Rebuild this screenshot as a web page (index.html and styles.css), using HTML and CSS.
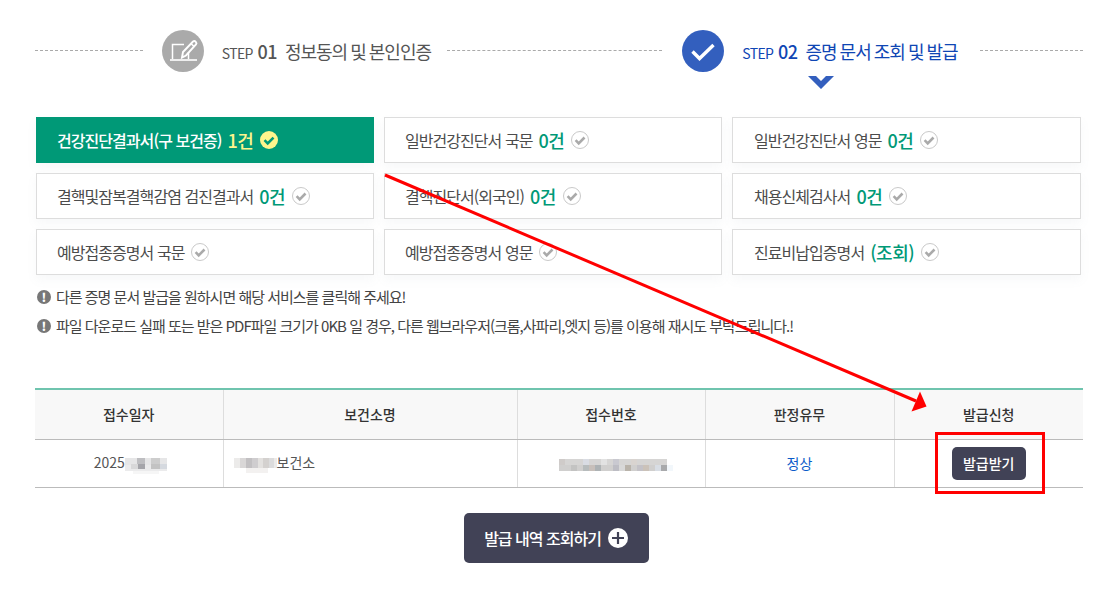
FILE: index.html
```html
<!DOCTYPE html>
<html lang="ko">
<head>
<meta charset="utf-8">
<title>증명 문서 조회 및 발급</title>
<link rel="stylesheet" href="styles.css">
</head>
<body>
<main class="page">
  <div class="steps">
    <span class="dash dash-a"></span>
    <span class="circle circle-grey">
      <svg width="42" height="42" viewBox="0 0 42 42"><path d="M22 14.500H10.500V29M26.500 22v7" fill="none" stroke="#fff" stroke-width="1.500"/><path d="M8 30h27" stroke="#fff" stroke-width="1.600"/><path d="M20 27.500l1-5.500 10-10.500q1.500-1 2.800 0.300t0.200 2.700L24 25.500z" fill="none" stroke="#fff" stroke-width="1.900"/><path d="M29 13.500l3.200 3.200" stroke="#fff" stroke-width="1.500"/></svg>
    </span>
    <span class="step-text step-text-a"><span class="step-label">STEP</span> <b class="step-num">01</b><span class="step-title">정보동의 및 본인인증</span></span>
    <span class="dash dash-b"></span>
    <span class="circle circle-blue">
      <svg width="42" height="42" viewBox="0 0 42 42"><path d="M10.500 21.500l7 7L31.500 15" fill="none" stroke="#fff" stroke-width="3.400"/></svg>
      <svg class="chevron" width="26" height="14" viewBox="0 0 26 14"><path d="M0 0h8l5 5 5-5h8L13 13z" fill="#335fbe"/></svg>
    </span>
    <span class="step-text step-text-b"><span class="step-label">STEP</span> <b class="step-num">02</b><span class="step-title">증명 문서 조회 및 발급</span></span>
    <span class="dash dash-c"></span>
  </div>

  <div class="cards">
    <a class="card card-on">건강진단결과서(구 보건증)<b class="count">1건</b><svg class="tick" width="18" height="18" viewBox="0 0 18 18"><circle cx="9" cy="9" r="9" fill="#fdf58d"/><path d="M4.500 9.200l3.200 3.200 5.800-5.800" fill="none" stroke="#009977" stroke-width="2.600"/></svg></a>
    <a class="card">일반건강진단서 국문<b class="count">0건</b><svg class="tick" width="18" height="18" viewBox="0 0 18 18"><circle cx="9" cy="9" r="8.500" fill="#fff" stroke="#c9c9c9"/><path d="M4.600 9.200l3.100 3.100 5.800-5.800" fill="none" stroke="#aaa" stroke-width="2.600"/></svg></a>
    <a class="card">일반건강진단서 영문<b class="count">0건</b><svg class="tick" width="18" height="18" viewBox="0 0 18 18"><circle cx="9" cy="9" r="8.500" fill="#fff" stroke="#c9c9c9"/><path d="M4.600 9.200l3.100 3.100 5.800-5.800" fill="none" stroke="#aaa" stroke-width="2.600"/></svg></a>
    <a class="card">결핵및잠복결핵감염 검진결과서<b class="count">0건</b><svg class="tick" width="18" height="18" viewBox="0 0 18 18"><circle cx="9" cy="9" r="8.500" fill="#fff" stroke="#c9c9c9"/><path d="M4.600 9.200l3.100 3.100 5.800-5.800" fill="none" stroke="#aaa" stroke-width="2.600"/></svg></a>
    <a class="card">결핵진단서(외국인)<b class="count">0건</b><svg class="tick" width="18" height="18" viewBox="0 0 18 18"><circle cx="9" cy="9" r="8.500" fill="#fff" stroke="#c9c9c9"/><path d="M4.600 9.200l3.100 3.100 5.800-5.800" fill="none" stroke="#aaa" stroke-width="2.600"/></svg></a>
    <a class="card">채용신체검사서<b class="count">0건</b><svg class="tick" width="18" height="18" viewBox="0 0 18 18"><circle cx="9" cy="9" r="8.500" fill="#fff" stroke="#c9c9c9"/><path d="M4.600 9.200l3.100 3.100 5.800-5.800" fill="none" stroke="#aaa" stroke-width="2.600"/></svg></a>
    <a class="card">예방접종증명서 국문<svg class="tick" width="18" height="18" viewBox="0 0 18 18"><circle cx="9" cy="9" r="8.500" fill="#fff" stroke="#c9c9c9"/><path d="M4.600 9.200l3.100 3.100 5.800-5.800" fill="none" stroke="#aaa" stroke-width="2.600"/></svg></a>
    <a class="card">예방접종증명서 영문<svg class="tick" width="18" height="18" viewBox="0 0 18 18"><circle cx="9" cy="9" r="8.500" fill="#fff" stroke="#c9c9c9"/><path d="M4.600 9.200l3.100 3.100 5.800-5.800" fill="none" stroke="#aaa" stroke-width="2.600"/></svg></a>
    <a class="card">진료비납입증명서<b class="count">(조회)</b><svg class="tick" width="18" height="18" viewBox="0 0 18 18"><circle cx="9" cy="9" r="8.500" fill="#fff" stroke="#c9c9c9"/><path d="M4.600 9.200l3.100 3.100 5.800-5.800" fill="none" stroke="#aaa" stroke-width="2.600"/></svg></a>
  </div>

  <ul class="notes">
    <li><span class="bang">!</span>다른 증명 문서 발급을 원하시면 해당 서비스를 클릭해 주세요!</li>
    <li><span class="bang">!</span>파일 다운로드 실패 또는 받은 PDF파일 크기가 0KB 일 경우, 다른 웹브라우저(크롬,사파리,엣지 등)를 이용해 재시도 부탁드립니다.!</li>
  </ul>

  <table class="result">
    <thead>
      <tr><th class="c1">접수일자</th><th class="c2">보건소명</th><th class="c3">접수번호</th><th class="c4">판정유무</th><th class="c5">발급신청</th></tr>
    </thead>
    <tbody>
      <tr>
        <td class="date">2025<svg class="mask" width="44" height="18" viewBox="0 0 44 18"><rect x="0" y="2" width="42" height="7" fill="#e6e6e7"/><rect x="0" y="9" width="42" height="6" fill="#ebebec"/><rect x="12" y="2" width="8" height="6" fill="#bebec1"/><rect x="13" y="8" width="7" height="5" fill="#a5a5aa"/><rect x="6" y="8" width="7" height="5" fill="#d8d8d9"/><rect x="26" y="2" width="9" height="6" fill="#cdcdcd"/><rect x="26" y="8" width="9" height="5" fill="#c3c3c3"/><rect x="35" y="8" width="7" height="5" fill="#d5d9df"/><rect x="8" y="15" width="26" height="3" fill="#f6f6f6"/></svg></td>
        <td class="left"><svg class="mask" width="43" height="18" viewBox="0 0 43 18"><rect x="0" y="2" width="43" height="10" fill="#ecebea"/><rect x="6" y="2" width="6" height="10" fill="#d9d7d7"/><rect x="12" y="2" width="6" height="10" fill="#c2c0c2"/><rect x="18" y="2" width="6" height="10" fill="#cfcdcf"/><rect x="24" y="2" width="5" height="10" fill="#e3e1df"/><rect x="29" y="2" width="6" height="10" fill="#d4d1cf"/><rect x="35" y="2" width="5" height="10" fill="#dcdcdd"/><rect x="12" y="12" width="22" height="5" fill="#f3f1f0"/></svg>보건소</td>
        <td class="receipt"><svg class="mask" width="114" height="12" viewBox="0 0 114 12"><g fill="#d6d5d4"><rect width="108" height="6"/></g><g fill="#d0cfce"><rect y="6" width="108" height="6"/></g><rect x="0" y="0" width="6" height="6" fill="#cfcbc9"/><rect x="24" y="0" width="6" height="6" fill="#d9dce3"/><rect x="12" y="6" width="6" height="6" fill="#c3c3c2"/><rect x="24" y="6" width="6" height="6" fill="#b7bcbd"/><rect x="30" y="6" width="6" height="6" fill="#c7bfba"/><rect x="36" y="6" width="6" height="6" fill="#adb2b4"/><rect x="42" y="0" width="6" height="6" fill="#e2e2e2"/><rect x="54" y="0" width="6" height="6" fill="#c9c9d0"/><rect x="54" y="6" width="6" height="6" fill="#bdbdc4"/><rect x="60" y="6" width="6" height="6" fill="#d8d8d8"/><rect x="66" y="6" width="6" height="6" fill="#b9b3aa"/><rect x="72" y="0" width="6" height="6" fill="#d9d4d0"/><rect x="78" y="6" width="6" height="6" fill="#c4c2c7"/><rect x="84" y="6" width="6" height="6" fill="#cbc2b9"/><rect x="96" y="6" width="6" height="6" fill="#d8dde4"/><rect x="102" y="6" width="6" height="6" fill="#a8a9ab"/><rect x="108" y="6" width="6" height="6" fill="#f2f7fb"/></svg></td>
        <td class="normal">정상</td>
        <td><button class="btn-small" type="button">발급받기</button></td>
      </tr>
    </tbody>
  </table>

  <div class="actions">
    <button class="btn-large" type="button">발급 내역 조회하기<svg width="20" height="20" viewBox="0 0 20 20"><circle cx="10" cy="10" r="10" fill="#fff"/><path d="M10 4v12M4 10h12" stroke="#414256" stroke-width="2.200"/></svg></button>
  </div>

  <svg class="annotation" width="1100" height="615" viewBox="0 0 1100 615">
    <path d="M385 175L916 401" stroke="#f00" stroke-width="3" fill="none"/>
    <path d="M926.500 406.500L911.500 411.500L920 391.500z" fill="#f00"/>
    <rect x="936.500" y="433.500" width="107" height="59" fill="none" stroke="#f00" stroke-width="3"/>
  </svg>
</main>
</body>
</html>
```
FILE: styles.css
```css
* { box-sizing: border-box; }
html, body { margin: 0; padding: 0; background: #fff; }
body {
  font-family: "Noto Sans CJK KR", "Noto Sans", sans-serif;
  color: #444;
  overflow: hidden;
}
.page { width: 1100px; height: 615px; padding: 30px 17px 0 35px; }
.annotation { position: absolute; left: 0; top: 0; pointer-events: none; }

.steps { display: flex; align-items: center; height: 42px; }
.dash { display: block; height: 0; border-top: 1px dashed #aaa; position: relative; top: -0.5px; }
.dash-a { width: 108px; margin-right: 19px; }
.dash-b { width: 216px; margin-left: 15px; margin-right: 20px; }
.dash-c { width: 103px; margin-left: 22px; }
.circle { position: relative; width: 42px; height: 42px; border-radius: 50%; display: block; flex: none; }
.circle svg { display: block; }
.circle-grey { background: #aaa; }
.circle-blue { background: #335fbe; }
.circle-blue .chevron { position: absolute; left: 126px; top: 46px; }
.step-text { display: block; white-space: nowrap; flex: none; color: #555; }
.step-text-a { margin-left: 18px; width: 210px; }
.step-text-b { margin-left: 18px; width: 216px; color: #0f46b4; }
.step-label { font-size: 14px; letter-spacing: -0.6px; }
.step-num { font-size: 18px; font-weight: 500; letter-spacing: -0.5px; }
.step-title { font-size: 18px; letter-spacing: -1px; word-spacing: -1px; margin-left: 8px; }

.cards {
  display: grid;
  grid-template-columns: 338px 338px 349px;
  grid-auto-rows: 46px;
  gap: 10px;
  margin: 45px 0 0 1px;
}
.card {
  display: flex;
  align-items: center;
  gap: 6px;
  padding-left: 20px;
  border: 1px solid #ddd;
  background: #fff;
  font-size: 16px;
  letter-spacing: -0.95px;
  color: #4c4c4c;
  white-space: nowrap;
  box-shadow: 0 5px 10px rgba(120, 130, 160, 0.06);
}
.card:nth-child(3n) { padding-left: 21px; }
.card-on { background: #009977; border-color: #009977; color: #fff; font-weight: 500; }
.count { font-size: 18px; font-weight: 500; color: #009977; letter-spacing: -0.5px; }
.card-on .count { color: #fdf58d; }
.tick { flex: none; margin-left: 1px; }

.notes { list-style: none; margin: 7px 0 0; padding: 0 0 0 2px; font-size: 15px; letter-spacing: -1px; color: #444; }
.notes li { display: flex; align-items: center; height: 29px; white-space: nowrap; }
.bang {
  width: 14px; height: 14px; border-radius: 50%; background: #777; color: #fff;
  font-size: 12px; font-weight: 900; line-height: 14px; text-align: center;
  margin-right: 5px; flex: none; letter-spacing: 0;
}

.result { width: 1048px; margin-top: 48px; border-collapse: collapse; table-layout: fixed; border-top: 2px solid #6fc4ae; font-size: 14px; }
.result th { height: 50px; background: #f8f8f8; font-weight: 500; color: #333; border-bottom: 1px solid #bbb; border-left: 1px solid #ddd; padding: 0; }
.result td { height: 48px; text-align: center; color: #555; border-bottom: 1px solid #bbb; border-left: 1px solid #ddd; padding: 0; }
.result th:first-child, .result td:first-child { border-left: 0; }
.result td.left { text-align: left; padding-left: 10px; }
.result td.date { padding-left: 5px; }
.result td.receipt { padding-left: 10px; }
.result td.normal { color: #0b5cc9; }
.mask { vertical-align: middle; }
.c1 { width: 188px; } .c2 { width: 294px; } .c3 { width: 188px; } .c4 { width: 189px; } .c5 { width: 189px; }
.btn-small {
  width: 74px; height: 33px; border: 0; border-radius: 5px; background: #414256; color: #fff;
  font: 500 14px "Noto Sans CJK KR", sans-serif; padding: 0;
}
.actions { display: flex; justify-content: center; margin-top: 25px; padding-right: 6px; }
.btn-large {
  display: flex; align-items: center; justify-content: center; gap: 7px;
  width: 185px; height: 50px; border: 0; border-radius: 5px; background: #414256; color: #fff;
  font: 500 16px "Noto Sans CJK KR", sans-serif; letter-spacing: -1px; padding: 0;
}
```
